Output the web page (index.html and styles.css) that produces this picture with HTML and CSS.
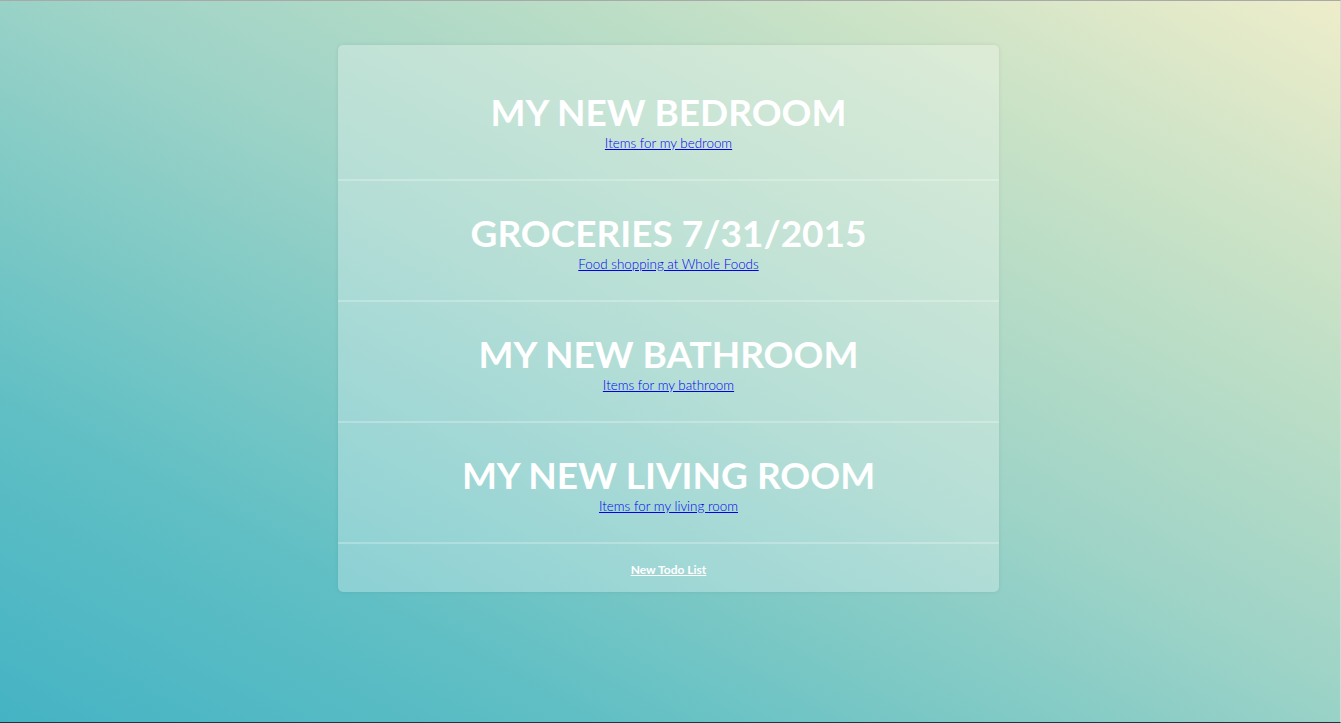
FILE: index.html
```html
<!DOCTYPE html>
<html>
<head>
<meta charset="utf-8">
<title>Todo Lists</title>
<link rel="stylesheet" href="styles.css">
</head>
<body>
<div class="page">
  <div class="card">
    <div class="list-row">
      <h1 class="list-title">MY NEW BEDROOM</h1>
      <a class="list-link" href="#">Items for my bedroom</a>
    </div>
    <div class="list-row">
      <h1 class="list-title">GROCERIES 7/31/2015</h1>
      <a class="list-link" href="#">Food shopping at Whole Foods</a>
    </div>
    <div class="list-row">
      <h1 class="list-title">MY NEW BATHROOM</h1>
      <a class="list-link" href="#">Items for my bathroom</a>
    </div>
    <div class="list-row">
      <h1 class="list-title">MY NEW LIVING ROOM</h1>
      <a class="list-link" href="#">Items for my living room</a>
    </div>
    <div class="card-footer">
      <a class="new-link" href="#">New Todo List</a>
    </div>
  </div>
</div>
</body>
</html>
```
FILE: styles.css
```css
html, body {
  margin: 0;
  padding: 0;
  height: 100%;
}
body {
  font-family: Lato, "Open Sans", sans-serif;
  background: linear-gradient(to top right, #45b3c4 0%, #60bfc4 22%, #9dd3c7 52%, #c6e1c6 78%, #eeedca 100%);
  overflow: hidden;
}
.page {
  box-sizing: border-box;
  height: 723px;
  padding-top: 45px;
  padding-right: 3px;
  border-top: 1px solid #a9a9a9;
  border-right: 1px solid #d8d8d8;
  border-bottom: 1px solid #1d3540;
}
.card {
  width: 661px;
  margin: -1px auto 0;
  padding-top: 15px;
  background: rgba(255, 255, 255, 0.28);
  border-radius: 5px;
  box-shadow: 0 0 4px rgba(0, 0, 0, 0.08);
  display: flex;
  flex-direction: column;
}
.list-row {
  box-sizing: border-box;
  display: flex;
  flex-direction: column;
  align-items: center;
  padding-top: 33px;
  height: 121px;
  border-bottom: 2px solid rgba(255, 255, 255, 0.25);
}
.list-title {
  margin: 0;
  font-size: 37px;
  line-height: 37px;
  font-weight: 700;
  color: #ffffff;
}
.list-link {
  margin-top: 5px;
  font-size: 13.4px;
  line-height: 16px;
  font-weight: 300;
  color: #0000ee;
}
.card-footer {
  box-sizing: border-box;
  height: 48px;
  padding-top: 3px;
  display: flex;
  align-items: center;
  justify-content: center;
}
.new-link {
  font-size: 12px;
  font-weight: 700;
  color: #ffffff;
}
```
